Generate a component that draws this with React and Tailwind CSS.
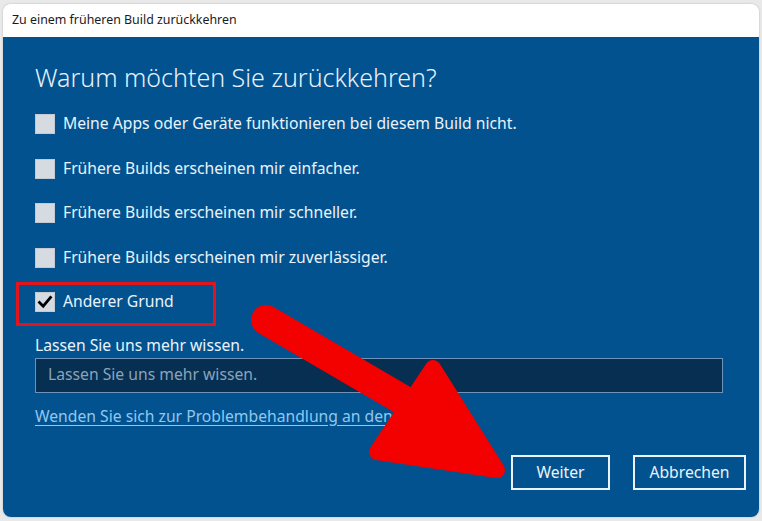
import React from "react";

const font = { fontFamily: '"Noto Sans", "Open Sans", sans-serif' };

function Box({ checked }) {
  return (
    <div className="w-[20px] h-[20px] bg-[#d6dbe1] border border-[#c3cad3] flex items-center justify-center shrink-0">
      {checked && (
        <svg width="16" height="16" viewBox="0 0 16 16">
          <path d="M2.5 8.5 L6.2 12.2 L13.5 3.5" fill="none" stroke="#000" strokeWidth="2.8" strokeLinecap="square" />
        </svg>
      )}
    </div>
  );
}

function Row({ label, checked }) {
  return (
    <div className="flex items-center gap-[8px] h-[44.5px]">
      <Box checked={checked} />
      <span className="text-[15.7px] text-[#e9f2fa] leading-none">{label}</span>
    </div>
  );
}

export default function App() {
  return (
    <div className="w-[762px] h-[521px] bg-[#e9e9e9] relative overflow-hidden pt-[4px] pl-[3px]" style={font}>
      <div className="w-[756px] h-[513px] rounded-[8px] overflow-hidden flex flex-col shadow-[0_0_2px_rgba(0,0,0,0.25)]">
        <div className="h-[33px] bg-white flex items-center pl-[9px] text-[12.4px] text-[#1a1a1a] shrink-0">
          Zu einem früheren Build zurückkehren
        </div>
        <div className="flex-1 bg-[#02528f] pl-[32px] pr-[36px] flex flex-col">
          <div className="text-[25px] font-light text-[#e6f1fb] mt-[24px] leading-[32px]">
            Warum möchten Sie zurückkehren?
          </div>
          <div className="mt-[9px] flex flex-col">
            <Row label="Meine Apps oder Geräte funktionieren bei diesem Build nicht." />
            <Row label="Frühere Builds erscheinen mir einfacher." />
            <Row label="Frühere Builds erscheinen mir schneller." />
            <Row label="Frühere Builds erscheinen mir zuverlässiger." />
            <div className="relative">
              <Row label="Anderer Grund" checked />
              <div className="absolute left-[-19px] top-[2px] w-[200px] h-[44px] border-[3px] border-[#e3141b]" />
            </div>
          </div>
          <div className="text-[15.7px] text-[#e9f2fa] mt-[11px] leading-[18px]">Lassen Sie uns mehr wissen.</div>
          <div className="mt-[4px] h-[35px] bg-[#062f52] border border-[#6d93b8] flex items-center pl-[12px] text-[15.7px] text-[#8ba3bb]">
            Lassen Sie uns mehr wissen.
          </div>
          <div className="mt-[14px] text-[15.7px] text-[#8fc8f2] underline underline-offset-[3px] leading-[18px]">
            Wenden Sie sich zur Problembehandlung an den Support.
          </div>
          <div className="mt-auto mb-[27px] flex justify-end gap-[23px] mr-[-23px]">
            <button className="w-[99px] h-[35px] border-2 border-[#e8f3fb] text-[15.7px] text-[#e9f2fa]">Weiter</button>
            <button className="w-[113px] h-[35px] border-2 border-[#e8f3fb] text-[15.7px] text-[#e9f2fa]">Abbrechen</button>
          </div>
        </div>
      </div>
      <svg className="absolute left-0 top-0 pointer-events-none" width="762" height="521" viewBox="0 0 762 521">
        <line x1="266" y1="320" x2="420" y2="410" stroke="#f30000" strokeWidth="30" strokeLinecap="round" />
        <polygon points="433,368 377,452 497,470" fill="#f30000" stroke="#f30000" strokeWidth="16" strokeLinejoin="round" />
      </svg>
    </div>
  );
}
